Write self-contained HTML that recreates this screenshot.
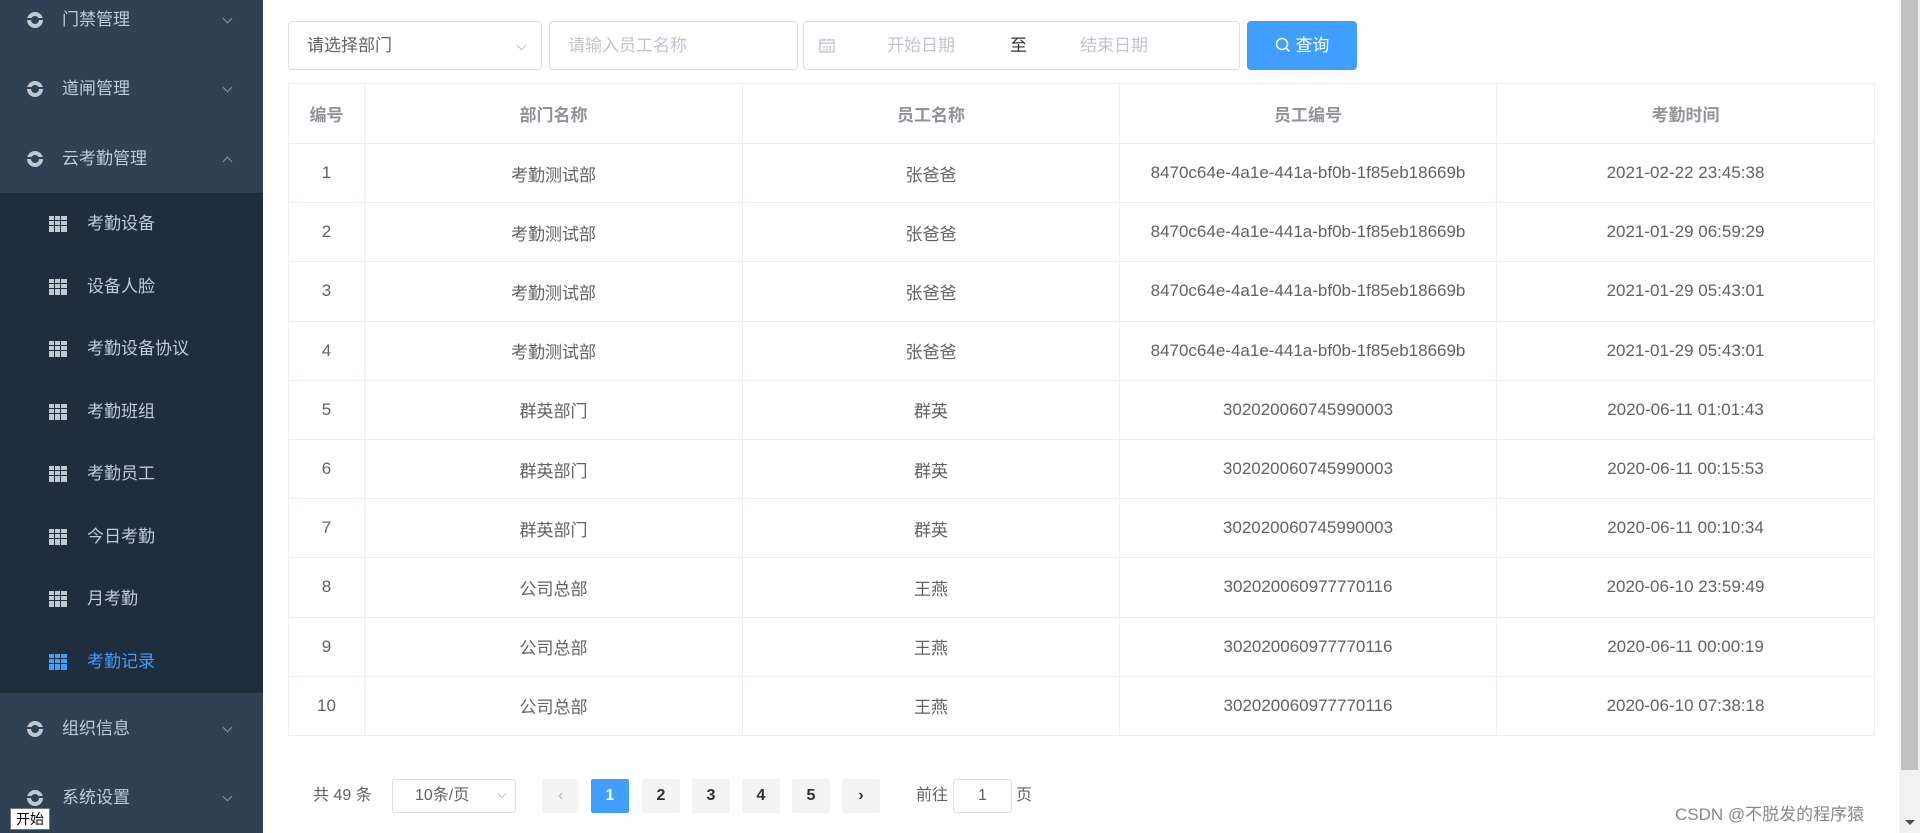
<!DOCTYPE html>
<html><head><meta charset="utf-8">
<style>
*{margin:0;padding:0;box-sizing:border-box}
body{width:1920px;height:833px;overflow:hidden;background:#fff;font-family:"Liberation Sans","Noto Sans CJK SC",sans-serif;position:relative}
.side{position:absolute;left:0;top:0;width:263px;height:833px;background:#304156}
.mi{position:absolute;left:0;width:263px;height:70px;color:#bfcbd9;font-size:17px;line-height:70px}
.mi .ic{position:absolute;left:27px;top:27px;width:16px;height:16px;border-radius:50%;border:4px solid #c0c8d2}
.mi .ic:after{content:"";position:absolute;left:-5px;top:2px;width:18px;height:2px;background:#304156}
.mi .t{position:absolute;left:62px}
.mi .ch{position:absolute;left:224px;top:30px;width:7px;height:7px;border-right:1px solid #909399;border-bottom:1px solid #909399;transform:rotate(45deg)}
.mi .ch.up{top:34px;transform:rotate(-135deg)}
.sub{position:absolute;left:0;top:193px;width:263px;height:500px;background:#1f2d3d}
.si{position:absolute;left:0;width:263px;height:62px;line-height:62px;color:#bfcbd9;font-size:17px}
.si .g{position:absolute;left:49px;top:23px;width:18px;height:16px;background:
linear-gradient(90deg,transparent 5px,#1f2d3d 5px,#1f2d3d 6px,transparent 6px,transparent 11px,#1f2d3d 11px,#1f2d3d 12px,transparent 12px),
linear-gradient(180deg,transparent 4px,#1f2d3d 4px,#1f2d3d 5px,transparent 5px,transparent 9px,#1f2d3d 9px,#1f2d3d 10px,transparent 10px),#c0c8d2}
.si .t{position:absolute;left:87px}
.si.act{color:#409eff}.si.act .g{background-color:#409eff}
.box{position:absolute;top:21px;height:49px;border:1px solid #dcdfe6;border-radius:4px;font-size:17px;line-height:47px}
.tbl{position:absolute;left:288px;top:83px;width:1586px;border-collapse:collapse;font-size:17px;color:#606266;table-layout:fixed}
.tbl td,.tbl th{border:1px solid #ebeef5;text-align:center;height:59.2px}
.tbl th{height:60px;color:#909399;font-weight:bold}
.pg{position:absolute;top:779px;height:34px;line-height:34px;font-size:16px;text-align:center;border-radius:2px;background:#f4f4f5;color:#303133;font-weight:bold}
</style></head><body>
<div class="side">
 <div class="mi" style="top:-15px"><span class="ic"></span><span class="t">门禁管理</span><span class="ch"></span></div>
 <div class="mi" style="top:54px"><span class="ic"></span><span class="t">道闸管理</span><span class="ch"></span></div>
 <div class="mi" style="top:124px"><span class="ic"></span><span class="t">云考勤管理</span><span class="ch up"></span></div>
 <div class="sub">
  <div class="si" style="top:0"><span class="g"></span><span class="t">考勤设备</span></div>
  <div class="si" style="top:62.5px"><span class="g"></span><span class="t">设备人脸</span></div>
  <div class="si" style="top:125px"><span class="g"></span><span class="t">考勤设备协议</span></div>
  <div class="si" style="top:187.5px"><span class="g"></span><span class="t">考勤班组</span></div>
  <div class="si" style="top:250px"><span class="g"></span><span class="t">考勤员工</span></div>
  <div class="si" style="top:312.5px"><span class="g"></span><span class="t">今日考勤</span></div>
  <div class="si" style="top:375px"><span class="g"></span><span class="t">月考勤</span></div>
  <div class="si act" style="top:437.5px"><span class="g"></span><span class="t">考勤记录</span></div>
 </div>
 <div class="mi" style="top:694px"><span class="ic"></span><span class="t">组织信息</span><span class="ch"></span></div>
 <div class="mi" style="top:763px"><span class="ic"></span><span class="t">系统设置</span><span class="ch"></span></div>
</div>
<div style="position:absolute;left:10px;top:808px;width:40px;height:22px;background:#fff;border:1px solid #777;font-size:14px;line-height:20px;text-align:center;color:#000">开始</div>

<div class="box" style="left:288px;width:254px;color:#606266;padding-left:18px">请选择部门<span style="position:absolute;right:16px;top:20px;width:7px;height:7px;border-right:1px solid #c0c4cc;border-bottom:1px solid #c0c4cc;transform:rotate(45deg)"></span></div>
<div class="box" style="left:549px;width:249px;color:#c0c4cc;padding-left:18px">请输入员工名称</div>
<div class="box" style="left:803px;width:437px;color:#c0c4cc">
 <svg style="position:absolute;left:15px;top:15px" width="16" height="16" viewBox="0 0 16 16"><rect x="1" y="3" width="14" height="12" fill="none" stroke="#c0c4cc" stroke-width="1.3"/><line x1="1" y1="6" x2="15" y2="6" stroke="#c0c4cc" stroke-width="1.3"/><line x1="5" y1="1" x2="5" y2="4" stroke="#c0c4cc"/><line x1="11" y1="1" x2="11" y2="4" stroke="#c0c4cc"/><g fill="#c0c4cc"><rect x="4" y="9" width="2" height="1.5"/><rect x="7" y="9" width="2" height="1.5"/><rect x="10" y="9" width="2" height="1.5"/><rect x="4" y="12" width="2" height="1.5"/><rect x="7" y="12" width="2" height="1.5"/><rect x="10" y="12" width="2" height="1.5"/></g></svg>
 <span style="position:absolute;left:83px">开始日期</span>
 <span style="position:absolute;left:206px;color:#303133">至</span>
 <span style="position:absolute;left:276px">结束日期</span>
</div>
<div class="box" style="left:1247px;width:110px;background:#409eff;border-color:#409eff;color:#fff;text-align:center">
 <svg style="vertical-align:-2px" width="16" height="16" viewBox="0 0 16 16"><circle cx="7" cy="7" r="5.5" fill="none" stroke="#fff" stroke-width="1.5"/><line x1="11" y1="11" x2="14.5" y2="14.5" stroke="#fff" stroke-width="1.5"/></svg> 查询</div>

<table class="tbl">
<colgroup><col style="width:76px"><col style="width:378px"><col style="width:377px"><col style="width:377px"><col style="width:378px"></colgroup>
<tr><th>编号</th><th>部门名称</th><th>员工名称</th><th>员工编号</th><th>考勤时间</th></tr>
<tr><td>1</td><td>考勤测试部</td><td>张爸爸</td><td>8470c64e-4a1e-441a-bf0b-1f85eb18669b</td><td>2021-02-22 23:45:38</td></tr>
<tr><td>2</td><td>考勤测试部</td><td>张爸爸</td><td>8470c64e-4a1e-441a-bf0b-1f85eb18669b</td><td>2021-01-29 06:59:29</td></tr>
<tr><td>3</td><td>考勤测试部</td><td>张爸爸</td><td>8470c64e-4a1e-441a-bf0b-1f85eb18669b</td><td>2021-01-29 05:43:01</td></tr>
<tr><td>4</td><td>考勤测试部</td><td>张爸爸</td><td>8470c64e-4a1e-441a-bf0b-1f85eb18669b</td><td>2021-01-29 05:43:01</td></tr>
<tr><td>5</td><td>群英部门</td><td>群英</td><td>302020060745990003</td><td>2020-06-11 01:01:43</td></tr>
<tr><td>6</td><td>群英部门</td><td>群英</td><td>302020060745990003</td><td>2020-06-11 00:15:53</td></tr>
<tr><td>7</td><td>群英部门</td><td>群英</td><td>302020060745990003</td><td>2020-06-11 00:10:34</td></tr>
<tr><td>8</td><td>公司总部</td><td>王燕</td><td>302020060977770116</td><td>2020-06-10 23:59:49</td></tr>
<tr><td>9</td><td>公司总部</td><td>王燕</td><td>302020060977770116</td><td>2020-06-11 00:00:19</td></tr>
<tr><td>10</td><td>公司总部</td><td>王燕</td><td>302020060977770116</td><td>2020-06-10 07:38:18</td></tr>
</table>

<div style="position:absolute;left:313px;top:779px;line-height:34px;font-size:16px;color:#606266">共 49 条</div>
<div style="position:absolute;left:392px;top:779px;width:124px;height:34px;border:1px solid #dcdfe6;border-radius:3px;line-height:32px;font-size:16px;color:#606266;padding-left:22px">10条/页<span style="position:absolute;right:10px;top:11px;width:6px;height:6px;border-right:1px solid #c0c4cc;border-bottom:1px solid #c0c4cc;transform:rotate(45deg)"></span></div>
<div class="pg" style="left:542px;width:37px;color:#c0c4cc">‹</div>
<div class="pg" style="left:591px;width:38px;background:#409eff;color:#fff">1</div>
<div class="pg" style="left:642px;width:38px">2</div>
<div class="pg" style="left:692px;width:38px">3</div>
<div class="pg" style="left:742px;width:38px">4</div>
<div class="pg" style="left:792px;width:38px">5</div>
<div class="pg" style="left:842px;width:38px">›</div>
<div style="position:absolute;left:916px;top:779px;line-height:34px;font-size:16px;color:#606266">前往</div>
<div style="position:absolute;left:953px;top:779px;width:59px;height:34px;border:1px solid #dcdfe6;border-radius:3px;line-height:32px;text-align:center;font-size:16px;color:#606266">1</div>
<div style="position:absolute;left:1016px;top:779px;line-height:34px;font-size:16px;color:#606266">页</div>

<div style="position:absolute;left:1675px;top:800px;font-size:17px;color:#888">CSDN @不脱发的程序猿</div>
<div style="position:absolute;left:1899px;top:0;width:21px;height:833px;background:#f1f1f1"></div>
<div style="position:absolute;left:1901px;top:0;width:17px;height:770px;background:#c1c1c1"></div>
<div style="position:absolute;left:1905px;top:820px;width:0;height:0;border-left:5px solid transparent;border-right:5px solid transparent;border-top:5px solid #505050"></div>
</body></html>
